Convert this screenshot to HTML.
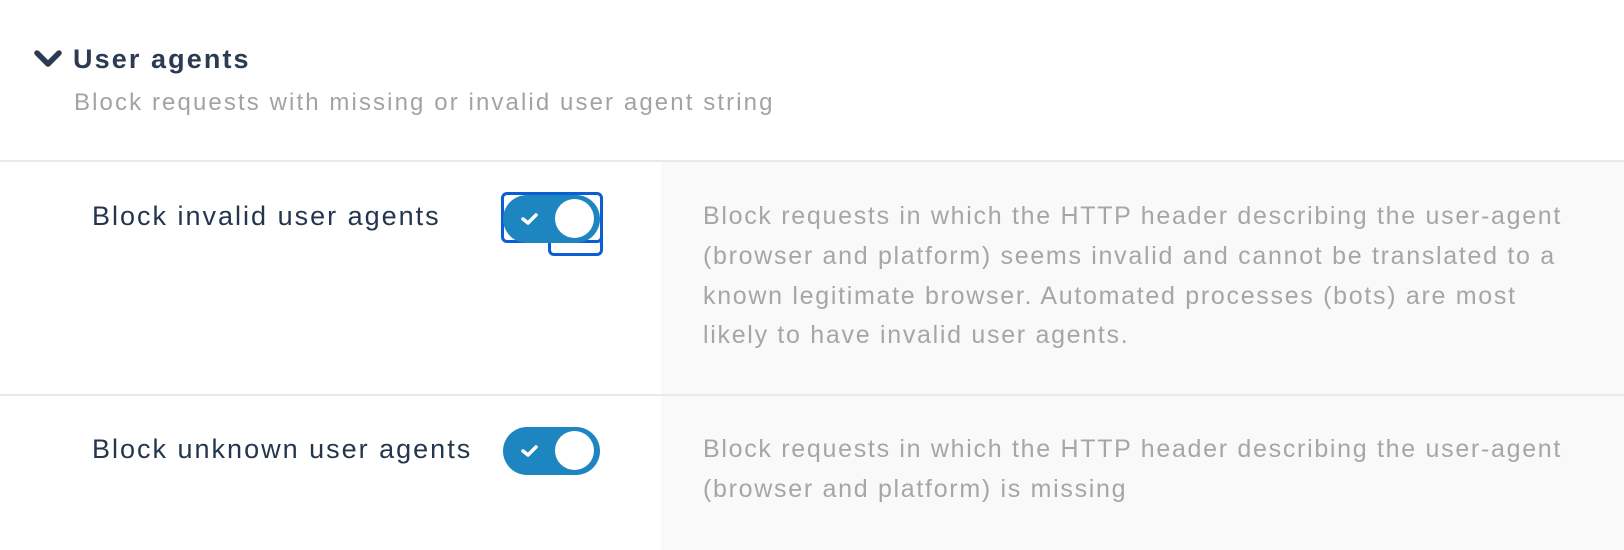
<!DOCTYPE html>
<html><head><style>
body{margin:0;width:1624px;height:550px;background:#fff;font-family:"Liberation Sans",sans-serif;overflow:hidden;position:relative}
.t{position:absolute;white-space:nowrap}
.h{left:73px;top:44px;font-size:27px;font-weight:bold;color:#2b3c52;letter-spacing:2.1px}
.sub{left:74px;top:89px;font-size:24px;color:#a3a3a3;letter-spacing:2.1px}
.line{position:absolute;left:0;width:1624px;height:2px;background:#e9e9e9}
.panel{position:absolute;left:661px;width:963px;background:#f9f9f9}
.lab{left:92px;font-size:27px;color:#23364d;letter-spacing:2px}
.desc{left:703px;font-size:25px;color:#a6a6a6;line-height:39.8px;letter-spacing:1.7px}
.tog{position:absolute;left:503px;width:97px;height:48px;border-radius:24px;background:#1d86c0}
.tog .k{position:absolute;right:6px;top:4px;width:39px;height:39px;border-radius:50%;background:#fff}
.tog svg{position:absolute;left:17px;top:16px}
</style></head><body>
<svg class="t" style="left:33px;top:48px" width="30" height="22" viewBox="0 0 30 22"><path d="M4 5 L15 16 L26 5" fill="none" stroke="#2b3c52" stroke-width="5.5" stroke-linecap="round" stroke-linejoin="round"/></svg>
<div class="t h">User agents</div>
<div class="t sub">Block requests with missing or invalid user agent string</div>
<div class="panel" style="top:162px;height:233px"></div>
<div class="panel" style="top:396px;height:154px"></div>
<div class="line" style="top:160px"></div>
<div class="line" style="top:394px"></div>
<div class="t lab" style="top:201px">Block invalid user agents</div>
<div class="t lab" style="top:434px">Block unknown user agents</div>
<div style="position:absolute;left:501px;top:192px;width:96px;height:45px;border:3px solid #0b5fd3;border-radius:6px"></div>
<div style="position:absolute;left:548px;top:237px;width:49px;height:16px;border:3px solid #0b5fd3;border-top:none;border-radius:0 0 6px 6px"></div>
<div style="position:absolute;left:550px;top:234px;width:47px;height:6px;background:#fff"></div>
<div class="tog" style="top:195px"><svg width="20" height="16" viewBox="0 0 20 16"><path d="M3 8 L8 12 L16 4" fill="none" stroke="#fff" stroke-width="3.5" stroke-linecap="round" stroke-linejoin="round"/></svg><div class="k"></div></div>
<div class="tog" style="top:427px"><svg width="20" height="16" viewBox="0 0 20 16"><path d="M3 8 L8 12 L16 4" fill="none" stroke="#fff" stroke-width="3.5" stroke-linecap="round" stroke-linejoin="round"/></svg><div class="k"></div></div>
<div class="t desc" style="top:197px">Block requests in which the HTTP header describing the user-agent<br>(browser and platform) seems invalid and cannot be translated to a<br>known legitimate browser. Automated processes (bots) are most<br>likely to have invalid user agents.</div>
<div class="t desc" style="top:430px">Block requests in which the HTTP header describing the user-agent<br>(browser and platform) is missing</div>
</body></html>
